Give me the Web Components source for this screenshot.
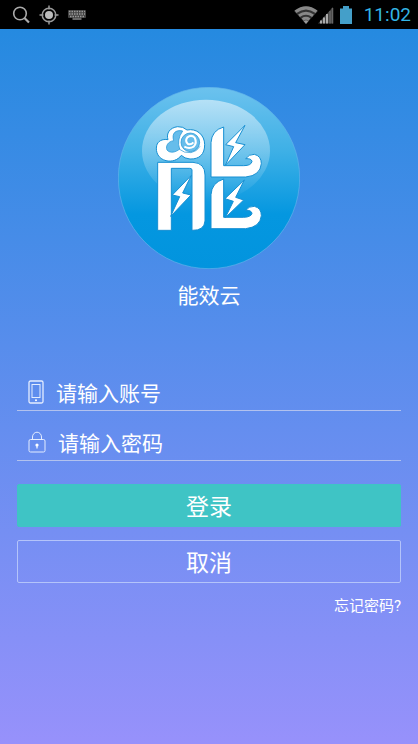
<!DOCTYPE html>
<html lang="zh-CN">
<head>
<meta charset="utf-8">
<meta name="viewport" content="width=device-width, initial-scale=1">
<title>能效云</title>
<style>
    body {
        margin: 0;
        color: #fff;
        font-family: Roboto, "Noto Sans CJK SC", sans-serif;
    }
</style>
</head>
<body>
<login-page>
    <status-bar slot="status" time="11:02"></status-bar>
    <brand-logo slot="brand">能效云</brand-logo>
    <login-form>
        <icon-field label="请输入账号" type="text">
            <svg slot="icon" width="16" height="24" viewBox="0 0 16 24" fill="none" stroke="#e4edff">
                <rect x="1" y="1" width="14" height="22" rx="1.5" stroke-width="1.3"/>
                <rect x="4" y="4.5" width="8" height="13"/>
                <circle cx="8" cy="20.3" r="1" fill="#fff" stroke="none"/>
            </svg>
        </icon-field>
        <icon-field label="请输入密码" type="password">
            <svg slot="icon" width="18" height="24" viewBox="0 0 18 24" fill="none" stroke="#e4edff">
                <rect x="1" y="9.5" width="16" height="12.5" rx="1.5"/>
                <path d="M4.5 9.500V7a4.500 4.800 0 0 1 9 0v2.500"/>
                <path d="M9 16v2.500" stroke-width="1.4"/>
                <circle cx="9" cy="15" r="1.6" fill="#fff" stroke="none"/>
            </svg>
        </icon-field>
    </login-form>
</login-page>

<script>
class StatusBar extends HTMLElement {
    constructor() {
        super();
        this.attachShadow({ mode: 'open' });
        this.shadowRoot.innerHTML = `
            <style>
                :host {
                    display: flex;
                    align-items: center;
                    justify-content: space-between;
                    height: 29px;
                    padding: 0 7px 0 12px;
                    background: #000;
                    color: #33b5e5;
                    font-size: 19px;
                }
                div { display: flex; align-items: center; }
                .left { gap: 9px; }
                .right { gap: 6px; }
                .signal { display: flex; }
                time { margin-left: 6px; line-height: 29px; }
                svg { display: block; }
            </style>
            <div class="left">
                <svg width="18" height="20" viewBox="0 0 18 20" fill="none" stroke="#aaa" stroke-width="1.6">
                    <circle cx="8" cy="8.500" r="6.300"/>
                    <path d="M12.500 13l4.500 4.500" stroke-width="2.200"/>
                </svg>
                <svg width="20" height="20" viewBox="0 0 20 20" fill="none" stroke="#999">
                    <circle cx="10" cy="10" r="6.800" stroke-width="1.500"/>
                    <circle cx="10" cy="10" r="4" fill="#bbb" stroke="none"/>
                    <path d="M10 .5v4M10 15.500v4M.5 10h4M15.500 10h4" stroke-width="1.500"/>
                </svg>
                <svg width="18" height="12" viewBox="0 0 18 12">
                    <rect y="1" width="18" height="8" rx="1" fill="#444"/>
                    <path d="M1 2.500h16M1 5h16M2 7.500h14" stroke="#999" stroke-width="1.400" stroke-dasharray="1.500 1"/>
                    <path d="M4.500 10h9" stroke="#888" stroke-width="1.500"/>
                </svg>
            </div>
            <div class="right">
                <div class="signal">
                    <svg width="24" height="18" viewBox="0 0 24 18" fill="none" stroke="#888" stroke-width="3">
                        <path d="M12 18L0 5Q12-4 24 5z" fill="#333" stroke="none"/>
                        <path d="M1.500 5.800Q12-2 22.500 5.800M5 9.800q7-5 14 0M8.500 13.500q3.500-2.300 7 0"/>
                        <path d="M12 18l-2.500-3q2.500-1.500 5 0z" fill="#999" stroke="none"/>
                    </svg>
                    <svg width="16" height="18" viewBox="0 0 16 18">
                        <path d="M0 17.500L15 1v16.500z" fill="#444"/>
                        <path d="M3 17.500v-3M6 17.500V11.500M9 17.500V8" stroke="#aaa" stroke-width="2"/>
                        <path d="M12 17.500V5M14.500 17.500V2" stroke="#666" stroke-width="1.500"/>
                    </svg>
                </div>
                <svg width="12" height="18" viewBox="0 0 12 18" fill="#449fc9">
                    <path d="M0 2.500h3V0h6v2.500h3V18H0z"/>
                </svg>
                <time></time>
            </div>
        `;
    }
    connectedCallback() {
        this.shadowRoot.querySelector('time').textContent = this.getAttribute('time');
    }
}
customElements.define('status-bar', StatusBar);

class BrandLogo extends HTMLElement {
    constructor() {
        super();
        this.attachShadow({ mode: 'open' });
        this.shadowRoot.innerHTML = `
            <style>
                :host {
                    display: flex;
                    flex-direction: column;
                    align-items: center;
                    gap: 14px;
                }
                h1 {
                    margin: 0;
                    font-size: 21px;
                    font-weight: 400;
                    line-height: 26px;
                }
            </style>
            <svg width="182" height="182" viewBox="24 21 546 546" aria-hidden="true">
                <defs>
                    <linearGradient id="ball" x2="0" y2="1">
                        <stop offset="0" stop-color="#6cc2ee"/>
                        <stop offset=".35" stop-color="#3eb0e6"/>
                        <stop offset=".7" stop-color="#0497e0"/>
                        <stop offset="1" stop-color="#0294de"/>
                    </linearGradient>
                    <linearGradient id="shine" x2="0" y2="1">
                        <stop offset="0" stop-color="#fff" stop-opacity=".53"/>
                        <stop offset=".55" stop-color="#fff" stop-opacity=".25"/>
                        <stop offset="1" stop-color="#fff" stop-opacity="0"/>
                    </linearGradient>
                </defs>
                <circle cx="297" cy="294" r="272" fill="url(#ball)" stroke="#62b3ea" stroke-width="2"/>
                <ellipse cx="288" cy="212" rx="192" ry="153" fill="url(#shine)"/>
                <g fill="#fff" stroke="#168fd2" stroke-width="3" stroke-linejoin="round">
                    <!-- cloud with its curl -->
                    <path d="M174 179C168 160 179 143 203 140Q219 139 231 150C259 144 284 164 284 194C284 223 268 238 240 237Q224 236 214 226C203 241 185 246 168 242C145 236 136 217 140 197C143 184 156 176 174 179z"/>
                    <path d="M218 153C197 148 184 160 191 182C174 184 166 198 171 210C180 221 198 217 209 207Q199 180 218 153z" fill="#66bdeb" stroke-width="2"/>
                    <path d="M207 207Q222 220 243 218Q262 214 270 199" fill="none" stroke-width="2"/>
                    <circle cx="241" cy="187" r="28" fill="#66bdeb" stroke-width="2"/>
                    <path d="M223 200Q238 208 251 200Q262 188 254 173Q244 163 232 172Q224 183 234 192Q244 195 250 187" fill="none" stroke="#fff" stroke-width="6"/>
                    <!-- gate -->
                    <path d="M143 247H249Q285 249 285 285V423Q283 452 246 451V270Q246 265 239 265H184V451H143z"/>
                    <!-- two waves -->
                    <path d="M303 291V188Q305 151 341 141V257H401Q424 257 426 244Q424 235 407 236Q417 222 433 223Q454 228 454 251Q451 287 407 291z"/>
                    <path d="M303 446V344Q305 308 341 297V412H401Q424 411 426 400Q424 390 407 391Q417 378 433 379Q454 384 454 407Q451 441 407 446z"/>
                    <!-- lightning -->
                    <path d="M244 286L187 345L209 350L182 409L243 345L218 339z"/>
                    <path d="M405 136L347 194L371 200L346 256L405 194L377 188z"/>
                    <path d="M403 300L345 356L370 364L346 413L401 360L377 352z"/>
                </g>
            </svg>
            <h1><slot></slot></h1>
        `;
    }
}
customElements.define('brand-logo', BrandLogo);

class IconField extends HTMLElement {
    constructor() {
        super();
        this.attachShadow({ mode: 'open' });
        this.shadowRoot.innerHTML = `
            <style>
                :host { display: block; }
                .row {
                    display: flex;
                    align-items: flex-end;
                    gap: 12px;
                    height: 49px;
                    padding: 0 11px;
                    border-bottom: 1px solid #b2c2ee;
                }
                label { display: flex; padding-bottom: 6px; }
                input {
                    flex: 1;
                    min-width: 0;
                    height: 32px;
                    padding: 0;
                    border: 0;
                    outline: 0;
                    background: none;
                    color: inherit;
                    font: inherit;
                    font-size: 21px;
                }
                input::placeholder { color: #fff; opacity: 1; }
            </style>
            <div class="row">
                <label for="field"><slot name="icon"></slot></label>
                <input id="field">
            </div>
        `;
    }
    connectedCallback() {
        const input = this.shadowRoot.getElementById('field');
        const label = this.getAttribute('label');
        input.type = this.getAttribute('type');
        input.placeholder = label;
        input.setAttribute('aria-label', label);
    }
}
customElements.define('icon-field', IconField);

class LoginForm extends HTMLElement {
    constructor() {
        super();
        this.attachShadow({ mode: 'open' });
        this.shadowRoot.innerHTML = `
            <style>
                :host { display: block; }
                form { display: flex; flex-direction: column; }
                .buttons {
                    display: grid;
                    gap: 13px;
                    margin: 23px 0 12px;
                }
                button {
                    height: 43px;
                    padding: 0 0 2px;
                    border: 1px solid #b4c4fa;
                    border-radius: 2px;
                    background: none;
                    color: inherit;
                    font: inherit;
                    font-size: 23px;
                    cursor: pointer;
                }
                button.primary { border-color: #3fc4c5; background: #3fc4c5; }
                a {
                    align-self: flex-end;
                    color: inherit;
                    font-size: 15px;
                    line-height: 22px;
                    text-decoration: none;
                }
            </style>
            <form>
                <slot></slot>
                <div class="buttons">
                    <button type="submit" class="primary">登录</button>
                    <button type="reset">取消</button>
                </div>
                <a href="#forgot">忘记密码?</a>
            </form>
        `;
    }
    connectedCallback() {
        this.shadowRoot.querySelector('form').addEventListener('submit', e => e.preventDefault());
    }
}
customElements.define('login-form', LoginForm);

class LoginPage extends HTMLElement {
    constructor() {
        super();
        this.attachShadow({ mode: 'open' });
        this.shadowRoot.innerHTML = `
            <style>
                :host {
                    display: flex;
                    flex-direction: column;
                    min-height: 100vh;
                }
                main {
                    flex: 1;
                    display: flex;
                    flex-direction: column;
                    gap: 52px;
                    padding: 58px 17px 24px;
                    background: linear-gradient(#258ae0, #9791fb);
                }
            </style>
            <slot name="status"></slot>
            <main>
                <slot name="brand"></slot>
                <slot></slot>
            </main>
        `;
    }
}
customElements.define('login-page', LoginPage);
</script>
</body>
</html>
